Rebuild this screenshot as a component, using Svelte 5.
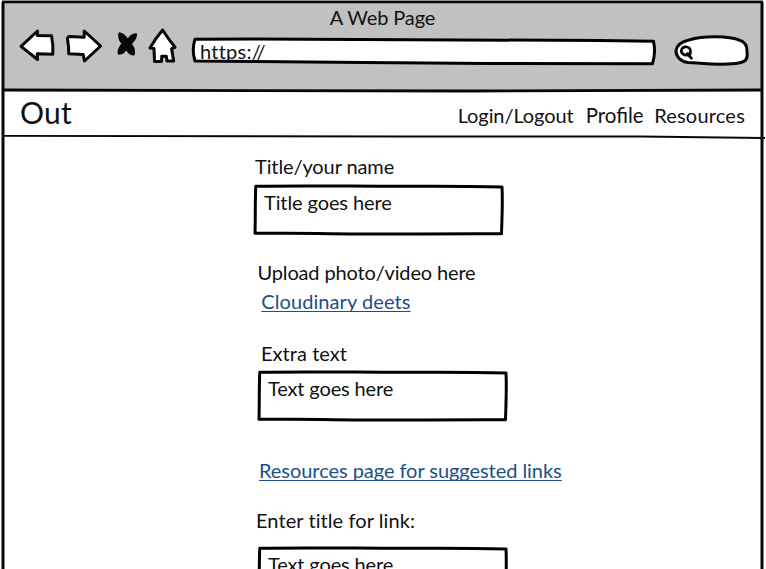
<script>
  const links = ['Login/Logout', 'Profile', 'Resources'];
</script>

{#snippet field(text)}
  <div class="field">
    <svg class="outline" width="254" height="54" viewBox="0 0 254 54">
      <path d="M2.800 3.300 C55 2.200 105 3.500 155 3.300 S215 3.100 249 3.900 C249.800 19 249 34 248.500 50.800 C180 50.400 120 51.900 65 50.600 C42 50.400 25 50.200 2 50.200 C2.500 33 2 18 2.800 3.300Z" />
    </svg>
    <span>{text}</span>
  </div>
{/snippet}

<div class="window">
  <header>
    <div class="title">A Web Page</div>
    <div class="toolbar">
      <svg class="back" width="38" height="40" viewBox="18 26 38 40">
        <path class="ink" d="M37.500 31 L21 46.300 L37.500 59.500 L37.200 53.800 L52.800 54.300 Q53.500 45 51.500 35.800 L37.400 35.500Z" />
      </svg>
      <svg class="forward" width="40" height="40" viewBox="64 26 40 40">
        <path class="ink" d="M84.200 31 L100.600 46 L84.500 61 L83.200 54.600 L68.700 53.800 Q69 47 67.600 40 Q67 37 69.500 36.600 L84.200 37.200Z" />
      </svg>
      <svg class="stop" width="24" height="40" viewBox="115 26 24 40">
        <path d="M118.800 32.300 C122.500 32.500 126 35.500 127.800 38.500 C129.500 35.500 132.500 33 136.800 33.300 C137.800 37 135 41 132 44 C134.500 47 136 51 134.500 55.500 C130.500 55.500 127.800 53.500 126.300 50.500 C124.500 53 122 55.300 118 54.600 C116.800 51.500 118.500 47 121.500 43.600 C118.500 41 117.500 36 118.800 32.300Z" />
      </svg>
      <svg class="home" width="31" height="40" viewBox="147 26 31 40">
        <path class="ink" d="M162.600 30 Q168 38.500 175 47.300 L171.600 48.700 L173.700 61 L167 61 L166.300 56.200 L161.800 56.200 L161.500 61.500 L154.500 61.500 L154 48.500 L150 48 Q155 39 162.600 30Z" />
      </svg>
      <div class="address">
        <svg class="outline" width="468" height="40" viewBox="190 26 468 40">
          <path class="ink" d="M196 39.300 C340 38.500 490 39 600 40.500 L654.500 41.300 Q657 52 653.500 63.800 C560 64 460 63.500 365 62.500 C300 61.500 240 61 196 61 Q192.500 50 196 39.300Z" />
        </svg>
        <span>https://</span>
      </div>
      <svg class="search" width="77" height="40" viewBox="673 26 77 40">
        <path class="ink" d="M689 40 C704 35.500 729 36 740 40.300 C748 43 747 50 747.200 55 C747.200 62 742 62.500 735 63.500 C715 66 699 62.500 688 62.500 C680 61.500 675.800 56 676 50.500 C677 45 682 41.500 689 40Z" />
        <path class="lens" d="M690.200 53.800 C687 56.500 681.500 54.800 681.300 51 C681.300 47.500 684.500 46.500 687 47 C690.500 47.500 691 51 690.200 53.800 L687.500 53.500 M688.300 55 L691.500 58.200" />
      </svg>
    </div>
  </header>

  <nav>
    <div class="brand">Out</div>
    <div class="links">
      {#each links as link}<span>{link}</span>{/each}
    </div>
  </nav>

  <main>
    <div class="label name">Title/your name</div>
    {@render field('Title goes here')}
    <div class="label upload">Upload photo/video here</div>
    <div class="label link cloud">Cloudinary deets</div>
    <div class="label extra">Extra text</div>
    <div class="shift">{@render field('Text goes here')}</div>
    <div class="label link resources">Resources page for suggested links</div>
    <div class="label enter">Enter title for link:</div>
    <div class="shift last">{@render field('Text goes here')}</div>
  </main>

  <svg class="frame" width="766" height="569" viewBox="0 0 766 569">
    <path d="M2 2 L763 2" stroke-width="2.500" />
    <path d="M3 2 L3 569" stroke-width="3" />
    <path d="M762 2 L762 569" stroke-width="3" />
    <path d="M3 90 C120 91.500 280 91.500 470 91 C580 90.200 680 89.800 762 90" stroke-width="2.800" />
    <path d="M3 135.800 L400 136.500 L640 136.500 L765 138" stroke-width="1.800" />
  </svg>
</div>

<style>
  :global(body) {
    background: #fff;
    overflow: hidden;
  }
  .window {
    position: relative;
    width: 766px;
    height: 569px;
    overflow: hidden;
    font: 20px/24px Lato, sans-serif;
    font-variant-ligatures: none;
    color: #111;
    background: #fff;
  }
  .frame {
    position: absolute;
    inset: 0;
    pointer-events: none;
  }
  .frame path {
    fill: none;
    stroke: #070707;
  }
  header {
    box-sizing: border-box;
    height: 91px;
    width: 761px;
    margin-left: 2px;
    padding-top: 5px;
    background: #c1c1c1;
  }
  .title {
    text-align: center;
    height: 21px;
    letter-spacing: -0.1px;
  }
  .toolbar {
    display: flex;
    height: 40px;
    padding-left: 16px;
  }
  svg {
    display: block;
    flex: none;
    overflow: visible;
  }
  .ink {
    fill: #fff;
    stroke: #070707;
    stroke-width: 3;
    stroke-linejoin: round;
  }
  .stop {
    fill: #070707;
  }
  .lens {
    fill: none;
    stroke: #070707;
    stroke-width: 2.7;
    stroke-linecap: round;
  }
  .forward {
    margin-left: 8px;
  }
  .stop {
    margin-left: 11px;
  }
  .home {
    margin-left: 8px;
  }
  .address {
    position: relative;
    width: 468px;
    margin: 0 16px 0 11px;
  }
  .outline {
    position: absolute;
    left: 0;
    top: 0;
  }
  .address span {
    position: relative;
    display: block;
    padding: 13px 0 0 11px;
    letter-spacing: 0.25px;
  }
  nav {
    display: flex;
    justify-content: space-between;
    height: 45px;
    box-sizing: border-box;
    padding: 3px 21px 0 20px;
  }
  .brand {
    font-size: 30px;
    line-height: 36px;
    letter-spacing: 0.2px;
  }
  .links {
    display: flex;
    gap: 10.5px;
    padding-top: 9px;
  }
  .links span:nth-child(1) {
    letter-spacing: -0.08px;
    margin-right: 1.5px;
  }
  .links span:nth-child(2) {
    font-size: 20.5px;
    font-variant-ligatures: normal;
  }
  .links span:nth-child(3) {
    letter-spacing: 0.2px;
  }
  main {
    display: flex;
    flex-direction: column;
    padding: 18px 0 0 253px;
  }
  .label {
    height: 24px;
    white-space: nowrap;
  }
  .name {
    padding-left: 2px;
    margin-bottom: 5px;
    letter-spacing: -0.1px;
  }
  .field {
    position: relative;
    width: 254px;
    height: 54px;
    flex: none;
  }
  .outline path {
    stroke-width: 3;
    stroke: #000;
    fill: #fff;
    stroke-linejoin: round;
  }
  .field span {
    position: relative;
    display: block;
    padding: 7px 0 0 11px;
    letter-spacing: -0.1px;
  }
  .upload {
    margin-top: 23px;
    padding-left: 4.5px;
    letter-spacing: -0.15px;
  }
  .link {
    color: #1a5085;
    text-decoration: underline;
    text-decoration-thickness: 1px;
    text-decoration-skip-ink: none;
    text-underline-offset: 2px;
  }
  .cloud {
    margin-top: 5px;
    padding-left: 8.3px;
    letter-spacing: 0.08px;
  }
  .extra {
    margin-top: 28px;
    padding-left: 8px;
    letter-spacing: 0.05px;
  }
  .shift {
    margin: 4px 0 0 4px;
  }
  .shift .field span {
    letter-spacing: -0.14px;
  }
  .resources {
    margin-top: 35px;
    padding-left: 6px;
    letter-spacing: -0.05px;
  }
  .enter {
    margin-top: 26px;
    padding-left: 3px;
    letter-spacing: 0.08px;
  }
  .last {
    margin-top: 13px;
  }
</style>
